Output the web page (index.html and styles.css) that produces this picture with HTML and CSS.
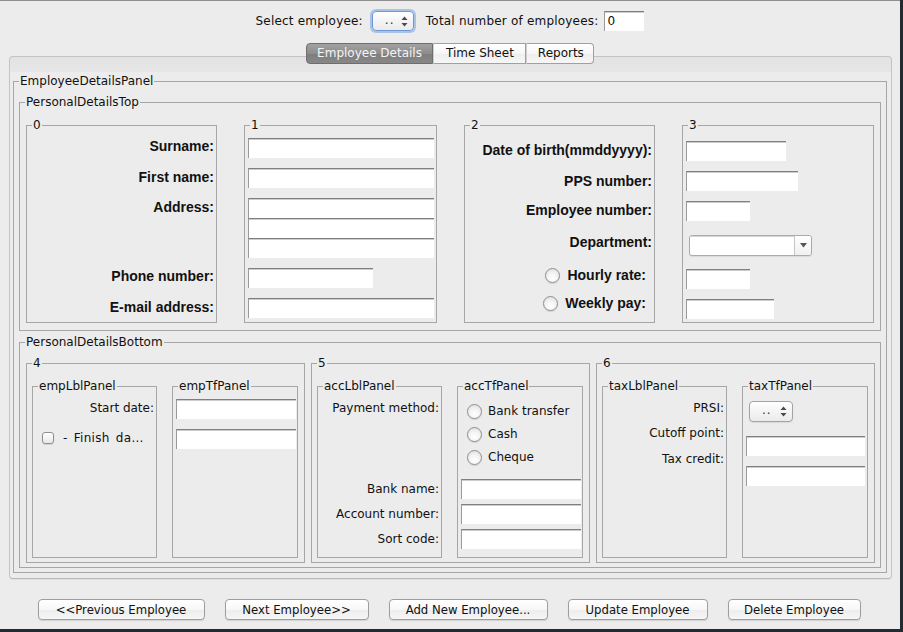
FILE: index.html
```html
<!DOCTYPE html>
<html>
<head>
<meta charset="utf-8">
<link rel="stylesheet" href="styles.css">
</head>
<body>
<div class="window">
  <div class="toprow">
    <span class="lbl">Select employee:</span>
    <span class="spinner focus main-spin"><span class="dots">..</span><svg class="arrows" width="7" height="11" viewBox="0 0 7 11"><path d="M3.5 0.5 L6.5 4 L0.5 4 Z M0.5 7 L6.5 7 L3.5 10.5 Z" fill="#4a4a4a"/></svg></span>
    <span class="lbl total-lbl">Total number of employees:</span>
    <span class="tf total-tf">0</span>
  </div>

  <div class="tabs">
    <span class="tab sel">Employee Details</span><span class="tab">Time Sheet</span><span class="tab last">Reports</span>
  </div>

  <div class="tabpanel">
    <div class="group edp">
      <div class="title">EmployeeDetailsPanel</div>

      <div class="group pdt">
        <div class="title">PersonalDetailsTop</div>
        <div class="grid4">
          <div class="group">
            <div class="title">0</div>
            <div class="lbl-col">
              <div class="blbl m4">Surname:</div>
              <div class="blbl m11">First name:</div>
              <div class="blbl m10">Address:</div>
              <div class="blbl m49">Phone number:</div>
              <div class="blbl m11">E-mail address:</div>
            </div>
          </div>
          <div class="group">
            <div class="title">1</div>
            <div class="tf-col">
              <div class="tf w186 m6"></div>
              <div class="tf w186 m10"></div>
              <div class="tf w186 m10"></div>
              <div class="tf w186"></div>
              <div class="tf w186"></div>
              <div class="tf w125 m10"></div>
              <div class="tf w186 m10"></div>
            </div>
          </div>
          <div class="group">
            <div class="title">2</div>
            <div class="lbl-col">
              <div class="blbl m8">Date of birth(mmddyyyy):</div>
              <div class="blbl m11">PPS number:</div>
              <div class="blbl m9">Employee number:</div>
              <div class="blbl m12">Department:</div>
              <div class="blbl radio-lbl m13"><span class="radio"></span>Hourly rate:</div>
              <div class="blbl radio-lbl m8"><span class="radio"></span>Weekly pay:</div>
            </div>
          </div>
          <div class="group">
            <div class="title">3</div>
            <div class="tf-col">
              <div class="tf w100 m9"></div>
              <div class="tf w112 m10"></div>
              <div class="tf w64 m10"></div>
              <div class="combo m14"><span class="combo-field"></span><span class="combo-btn"><svg width="7" height="5" viewBox="0 0 7 5"><path d="M0 0 L7 0 L3.5 4.5 Z" fill="#555"/></svg></span></div>
              <div class="tf w64 m13"></div>
              <div class="tf w88 m10"></div>
            </div>
          </div>
        </div>
      </div>

      <div class="group pdb">
        <div class="title">PersonalDetailsBottom</div>
        <div class="grid3">
          <div class="group">
            <div class="title">4</div>
            <div class="pair">
              <div class="group">
                <div class="title">empLblPanel</div>
                <div class="lbl-col">
                  <div class="rlbl m7">Start date:</div>
                </div>
                <div class="check-row"><span class="checkbox"></span><span class="finish">- Finish da...</span></div>
              </div>
              <div class="group">
                <div class="title">empTfPanel</div>
                <div class="tf-col">
                  <div class="tf w120 m6"></div>
                  <div class="tf w120 m10"></div>
                </div>
              </div>
            </div>
          </div>
          <div class="group">
            <div class="title">5</div>
            <div class="pair">
              <div class="group">
                <div class="title">accLblPanel</div>
                <div class="lbl-col">
                  <div class="rlbl m7">Payment method:</div>
                  <div class="rlbl m65">Bank name:</div>
                  <div class="rlbl m9">Account number:</div>
                  <div class="rlbl m9">Sort code:</div>
                </div>
              </div>
              <div class="group">
                <div class="title">accTfPanel</div>
                <div class="radio-row m8"><span class="radio"></span>Bank transfer</div>
                <div class="radio-row m3"><span class="radio"></span>Cash</div>
                <div class="radio-row m3"><span class="radio"></span>Cheque</div>
                <div class="tf-col">
                  <div class="tf w120 m12"></div>
                  <div class="tf w120 m5"></div>
                  <div class="tf w120 m5"></div>
                </div>
              </div>
            </div>
          </div>
          <div class="group">
            <div class="title">6</div>
            <div class="pair">
              <div class="group">
                <div class="title">taxLblPanel</div>
                <div class="lbl-col">
                  <div class="rlbl m7">PRSI:</div>
                  <div class="rlbl m9">Cutoff point:</div>
                  <div class="rlbl m10">Tax credit:</div>
                </div>
              </div>
              <div class="group">
                <div class="title">taxTfPanel</div>
                <div class="tf-col">
                  <span class="spinner tax-spin m8"><span class="dots">..</span><svg class="arrows" width="7" height="11" viewBox="0 0 7 11"><path d="M3.5 0.5 L6.5 4 L0.5 4 Z M0.5 7 L6.5 7 L3.5 10.5 Z" fill="#4a4a4a"/></svg></span>
                  <div class="tf w119 m14"></div>
                  <div class="tf w119 m10"></div>
                </div>
              </div>
            </div>
          </div>
        </div>
      </div>
    </div>
  </div>

  <div class="buttons">
    <button class="btn b-prev">&lt;&lt;Previous Employee</button>
    <button class="btn b-next">Next Employee&gt;&gt;</button>
    <button class="btn b-add">Add New Employee...</button>
    <button class="btn b-upd">Update Employee</button>
    <button class="btn b-del">Delete Employee</button>
  </div>
</div>
</body>
</html>
```

FILE: styles.css
```css
* { box-sizing: border-box; }

body {
  margin: 0;
  width: 903px;
  height: 632px;
  overflow: hidden;
  background: #232a30;
  font-family: "DejaVu Sans", "Noto Sans", sans-serif;
  font-size: 12px;
  color: #111;
}

.window {
  width: 900px;
  height: 629px;
  background: #ececec;
  border-top: 1px solid #8e8e8e;
}

/* ---------- top row ---------- */
.toprow {
  display: flex;
  justify-content: center;
  align-items: center;
  padding-top: 10px;
  height: 30px;
}
.lbl { line-height: 16px; letter-spacing: 0.2px; }
.main-spin { margin-left: 9px; width: 42px; height: 20px; }
.total-lbl { margin-left: 12px; }
.total-tf {
  margin-left: 6px;
  width: 40px;
  height: 20px;
  line-height: 18px;
  padding-left: 2px;
  font-size: 12px;
}

.spinner {
  display: flex;
  align-items: center;
  justify-content: space-between;
  padding: 0 5px 0 12px;
  border: 1px solid #a3a3a3;
  border-radius: 4px;
  background: linear-gradient(#ffffff, #f4f4f4 50%, #ebebeb);
  box-shadow: 0 1px 1px rgba(0,0,0,0.08);
}
.spinner.focus {
  border-color: #6f97d3;
  box-shadow: 0 0 0 2px #a7c3ea;
}
.spinner .dots { font-size: 12px; line-height: 12px; color: #333; margin-top: -3px; letter-spacing: 1px; }
.tax-spin { width: 44px; height: 21px; margin-left: 3px; }

/* ---------- tabs ---------- */
.tabs {
  display: flex;
  justify-content: center;
  margin-top: 12px;
  height: 21px;
  margin-bottom: -8px;
  position: relative;
  z-index: 1;
}
.tab {
  height: 21px;
  line-height: 19px;
  padding: 0 11px 0 12px;
  border: 1px solid #a0a0a0;
  border-left: 1px solid #cfcfcf;
  background: linear-gradient(#ffffff, #f6f6f6 50%, #ededed 51%, #f7f7f7);
  color: #111;
}
.tab.sel {
  border-radius: 4px 0 0 4px;
  border: 1px solid #6e6e6e;
  background: linear-gradient(#a2a2a2, #8c8c8c 50%, #7d7d7d 51%, #888888);
  color: #f4f4f4;
  padding: 0 10px;
}
.tab.last { border-radius: 0 4px 4px 0; padding: 0 9px 0 11px; }

/* ---------- tab panel ---------- */
.tabpanel {
  margin-left: 9px;
  width: 883px;
  height: 523px;
  border: 1px solid #c4c4c4;
  border-bottom-color: #b9b9b9;
  border-radius: 4px;
  background: linear-gradient(#e3e3e3 0, #e6e6e6 15px, #ececec 15px);
  box-shadow: 0 1px 1px rgba(0,0,0,0.06);
}

/* titled groups */
.group {
  border: 1px solid #a6a6a6;
}
.title {
  width: fit-content;
  margin: -8px 0 0 5px;
  padding: 0 1px;
  height: 14px;
  line-height: 14px;
  background: #ececec;
  white-space: nowrap;
  color: #111;
}

.edp { margin: 24px 0 0 3px; width: 874px; height: 492px; }
.pdt { margin: 14px 0 0 5px; width: 862px; height: 229px; }
.pdb { margin: 11px 0 0 5px; width: 862px; height: 226px; }

.grid4 {
  display: grid;
  grid-template-columns: 191px 193px 191px 192px;
  justify-content: space-between;
  padding: 0 6px;
  margin-top: 16px;
  height: 198px;
}
.grid3 {
  display: grid;
  grid-template-columns: repeat(3, 279px);
  column-gap: 6px;
  padding-left: 6px;
  margin-top: 14px;
  height: 200px;
}
.pair {
  display: grid;
  grid-template-columns: 125px 126px;
  column-gap: 15px;
  padding-left: 5px;
  margin-top: 16px;
  height: 172px;
}

/* label columns */
.lbl-col {
  display: flex;
  flex-direction: column;
  align-items: flex-end;
  padding-right: 2px;
}
.blbl {
  font-family: "Liberation Sans", Arial, sans-serif;
  font-weight: bold;
  font-size: 14px;
  line-height: 20px;
  height: 20px;
  color: #111;
  white-space: nowrap;
}
.rlbl {
  line-height: 16px;
  height: 16px;
  white-space: nowrap;
}
.radio-lbl {
  display: flex;
  align-items: center;
  gap: 7px;
  padding-right: 6px;
}

/* text fields */
.tf-col {
  display: flex;
  flex-direction: column;
  align-items: flex-start;
  padding-left: 3px;
}
.tf {
  display: block;
  height: 20px;
  background: #fff;
  border-top: 1px solid #7f7f7f;
  border-left: 1px solid #9b9b9b;
  box-shadow: inset 0 1px 0 #cdcdcd;
}
.w186 { width: 186px; }
.w125 { width: 125px; }
.w120 { width: 120px; }
.w119 { width: 119px; }
.w112 { width: 112px; }
.w100 { width: 100px; }
.w88 { width: 88px; }
.w64 { width: 64px; }

/* combo */
.combo {
  display: flex;
  width: 123px;
  height: 21px;
  margin-left: 3px;
  border: 1px solid #ababab;
  border-radius: 3px;
  background: #fff;
  box-shadow: 0 1px 1px rgba(0,0,0,0.08);
}
.combo-field { flex: 1; border-top: 1px solid #d6d6d6; }
.combo-btn {
  width: 17px;
  border-left: 1px solid #c6c6c6;
  display: flex;
  align-items: center;
  justify-content: center;
  background: linear-gradient(#ffffff, #f0f0f0);
  border-radius: 0 3px 3px 0;
}

/* radios & checkbox */
.radio {
  display: inline-block;
  width: 15px;
  height: 15px;
  border-radius: 50%;
  border: 1px solid #8f8f8f;
  background: radial-gradient(circle at 50% 70%, #ffffff 0, #f4f4f4 45%, #d9d9d9 100%);
  box-shadow: 0 1px 1px rgba(0,0,0,0.12);
  flex: none;
}
.radio-row {
  display: flex;
  align-items: center;
  gap: 6px;
  height: 20px;
  padding-left: 9px;
  white-space: nowrap;
}
.check-row {
  display: flex;
  align-items: center;
  gap: 9px;
  height: 16px;
  margin-top: 14px;
  padding-left: 9px;
  white-space: nowrap;
}
.finish { word-spacing: 2px; letter-spacing: 0.3px; }
.checkbox {
  width: 12px;
  height: 12px;
  border: 1px solid #8f8f8f;
  border-radius: 3px;
  background: linear-gradient(#ffffff, #e8e8e8);
  box-shadow: 0 1px 1px rgba(0,0,0,0.1);
  flex: none;
}

/* spacing modifiers */
.m3 { margin-top: 3px; }
.m4 { margin-top: 4px; }
.m5 { margin-top: 5px; }
.m6 { margin-top: 6px; }
.m7 { margin-top: 7px; }
.m8 { margin-top: 8px; }
.m9 { margin-top: 9px; }
.m10 { margin-top: 10px; }
.m11 { margin-top: 11px; }
.m12 { margin-top: 12px; }
.m13 { margin-top: 13px; }
.m14 { margin-top: 14px; }
.m49 { margin-top: 49px; }
.m65 { margin-top: 65px; }

/* ---------- buttons ---------- */
.buttons {
  display: flex;
  justify-content: center;
  gap: 20px;
  margin-top: 20px;
  padding-right: 2px;
}
.btn {
  height: 21px;
  padding: 0;
  border: 1px solid #9e9e9e;
  border-radius: 4px;
  background: linear-gradient(#ffffff, #f7f7f7 50%, #ededed 51%, #f6f6f6);
  box-shadow: 0 1px 1px rgba(0,0,0,0.12);
  font-family: "DejaVu Sans Condensed", "DejaVu Sans", sans-serif;
  font-stretch: condensed;
  font-size: 13px;
  line-height: 19px;
  color: #111;
}
.b-prev { width: 167px; }
.b-next { width: 144px; }
.b-add { width: 159px; }
.b-upd { width: 140px; }
.b-del { width: 133px; }
```
